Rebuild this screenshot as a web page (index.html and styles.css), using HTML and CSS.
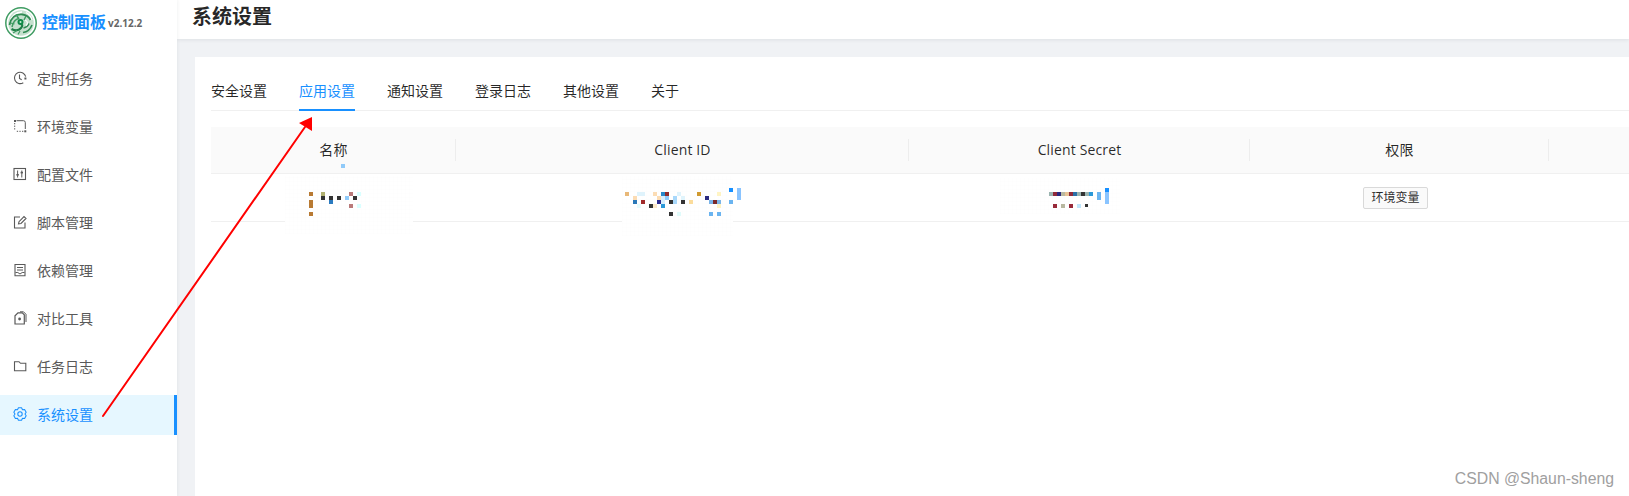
FILE: index.html
```html
<!DOCTYPE html>
<html lang="zh-CN">
<head>
<meta charset="utf-8">
<title>系统设置</title>
<link rel="stylesheet" href="styles.css">
</head>
<body>
<div class="layout">
  <aside class="sider">
    <div class="brand">
      <svg class="logo" viewBox="0 0 32 32" aria-hidden="true">
        <circle cx="16" cy="16" r="15.200" fill="#fff" stroke="#3f9c62" stroke-width="1.500"/>
        <circle cx="16" cy="16" r="12.800" fill="#c4e0cd"/>
        <path d="M5 15C6 9 11 5 17 5M27 13C26 9 24 7 21 5.500" fill="none" stroke="#fff" stroke-width="1.300"/>
        <path d="M4.500 18C6 10 11 7 17.500 7.500 21 8 24 10 25.500 13" fill="none" stroke="#2f8a52" stroke-width="1.800"/>
        <path d="M7 20C8 15 11 12 14 11.500M11 7.500 14 12M21 9 19 13" fill="none" stroke="#3f9c62" stroke-width="1.500"/>
        <path d="M6.500 22C10 24 14 23.500 16 21 18 19 17.500 17 15.500 17" fill="none" stroke="#1f7f47" stroke-width="2.200"/>
        <path d="M18 25.500C22 25 25.500 22 27 18M18.500 21C21 20.500 23 19 24 16.500" fill="none" stroke="#2f8a52" stroke-width="1.600"/>
        <path d="M8 26 12 23.500M13 27.500 15 24M5.500 16 9.500 17" fill="none" stroke="#3f9c62" stroke-width="1.200"/>
        <path d="M20 13C23 14 23 17 21 18.500" fill="none" stroke="#fff" stroke-width="1.200"/>
        <circle cx="15.500" cy="15" r="3" fill="#0f8a48"/>
        <circle cx="15.500" cy="15" r="1" fill="#c9efd6"/>
      </svg>
      <span class="brand-name">控制面板</span>
      <span class="brand-version">v2.12.2</span>
    </div>
    <nav class="menu">
      <a class="menu-item">
        <svg class="menu-icon" viewBox="0 0 14 14" aria-hidden="true"><path d="M12.700 5.600A5.700 5.700 0 1 0 10.300 11.700" fill="none" stroke="currentColor" stroke-width="1.100"/><path d="M6.500 3.600V7.400L8.700 8.800" fill="none" stroke="currentColor" stroke-width="1.100"/><rect x="11.400" y="6.500" width="2" height="2" fill="currentColor"/></svg>
        <span>定时任务</span>
      </a>
      <a class="menu-item">
        <svg class="menu-icon" viewBox="0 0 14 14" aria-hidden="true"><path d="M3.500 1.700H10.500Q12.300 1.700 12.300 3.500V10" fill="none" stroke="currentColor" stroke-width="1"/><path d="M1.700 4V11M3.800 12.300H10.500" fill="none" stroke="currentColor" stroke-width="1" stroke-dasharray="1.300 1.300"/><rect x="1" y="1" width="2" height="2" fill="currentColor"/><rect x="11.300" y="11.300" width="2" height="2" fill="currentColor"/></svg>
        <span>环境变量</span>
      </a>
      <a class="menu-item">
        <svg class="menu-icon" viewBox="0 0 14 14" aria-hidden="true"><rect x="1" y="1.500" width="11.500" height="11" fill="none" stroke="currentColor" stroke-width="1.100"/><path d="M4.600 3.500V10.500M8.800 3.500V10.500" fill="none" stroke="currentColor"/><rect x="3.400" y="7" width="2.400" height="1.600" fill="currentColor"/><rect x="7.600" y="4.800" width="2.400" height="1.600" fill="currentColor"/></svg>
        <span>配置文件</span>
      </a>
      <a class="menu-item">
        <svg class="menu-icon" viewBox="0 0 14 14" aria-hidden="true"><path d="M7 2H1.500V13H12V7.500" fill="none" stroke="currentColor" stroke-width="1.100"/><path d="M5.500 8.800L6 6.700 11 1.500 13 3.500 8 8.500z" fill="none" stroke="currentColor" stroke-width="1.100"/></svg>
        <span>脚本管理</span>
      </a>
      <a class="menu-item">
        <svg class="menu-icon" viewBox="0 0 14 14" aria-hidden="true"><path d="M2 1.500H12V12.800H2z" fill="none" stroke="currentColor" stroke-width="1.100"/><path d="M4 4.500H10M4 7H10" stroke="currentColor" fill="none"/><path d="M2.500 9.500H4.800L7 11 9.200 9.500H11.500" fill="none" stroke="currentColor"/></svg>
        <span>依赖管理</span>
      </a>
      <a class="menu-item">
        <svg class="menu-icon" viewBox="0 0 14 14" aria-hidden="true"><path d="M5 1.800H9.300L11.300 3.800V13H2V4.800z" fill="none" stroke="currentColor" stroke-width="1.200"/><path d="M7 .8H10.500L13 3.300V11" fill="none" stroke="currentColor"/><circle cx="6.600" cy="8" r="1.400" fill="currentColor"/></svg>
        <span>对比工具</span>
      </a>
      <a class="menu-item">
        <svg class="menu-icon" viewBox="0 0 14 14" aria-hidden="true"><path d="M1.500 2.700H6L7.500 4.300H12.800V11.800H1.500z" fill="none" stroke="currentColor" stroke-width="1.100"/></svg>
        <span>任务日志</span>
      </a>
      <a class="menu-item is-active">
        <svg class="menu-icon" viewBox="0 0 14 14" aria-hidden="true"><path d="M5.450.79 8.550.79 9.500 2.670 11.600 2.550 13.150 5.240 12 7 13.150 8.760 11.600 11.450 9.500 11.330 8.550 13.210 5.450 13.210 4.500 11.330 2.400 11.450.85 8.760 2 7 .85 5.240 2.400 2.550 4.500 2.670z" fill="none" stroke="currentColor" stroke-width="1.050" stroke-linejoin="round"/><circle cx="7" cy="7" r="2.200" fill="none" stroke="currentColor" stroke-width="1.050"/></svg>
        <span>系统设置</span>
      </a>
    </nav>
  </aside>

  <div class="main">
    <header class="page-header"><h1 class="page-title">系统设置</h1></header>
    <div class="content">
      <section class="card">
        <div class="tabs">
          <a class="tab">安全设置</a>
          <a class="tab is-active">应用设置</a>
          <a class="tab">通知设置</a>
          <a class="tab">登录日志</a>
          <a class="tab">其他设置</a>
          <a class="tab">关于</a>
        </div>
        <table class="table">
          <colgroup>
            <col class="col-name"><col class="col-id"><col class="col-secret"><col class="col-scope"><col class="col-action">
          </colgroup>
          <thead>
            <tr><th>名称</th><th>Client ID</th><th>Client Secret</th><th>权限</th><th></th></tr>
          </thead>
          <tbody>
            <tr><td></td><td></td><td></td><td><span class="tag">环境变量</span></td><td></td></tr>
          </tbody>
        </table>
      </section>
    </div>
  </div>
</div>

<div class="veil veil-name"></div>
<div class="veil veil-id"></div>
<div class="veil veil-secret"></div>

<svg class="overlay" viewBox="0 0 1629 496" aria-hidden="true">
  <g>
    <rect x="341" y="164" width="4" height="4" fill="#90caf9"/>
    <rect x="309" y="192" width="4" height="4" fill="#b87a33"/>
    <rect x="309" y="200" width="4" height="8" fill="#b87a33"/>
    <rect x="309" y="212" width="4" height="4" fill="#b87a33"/>
    <rect x="321" y="192" width="4" height="4" fill="#b0b070"/>
    <rect x="321" y="196" width="4" height="4" fill="#333"/>
    <rect x="329" y="196" width="4" height="4" fill="#333"/>
    <rect x="329" y="200" width="4" height="4" fill="#2a7abf"/>
    <rect x="337" y="196" width="4" height="4" fill="#333"/>
    <rect x="345" y="196" width="4" height="4" fill="#90caf9"/>
    <rect x="349" y="192" width="4" height="4" fill="#b97a7a"/>
    <rect x="353" y="196" width="4" height="4" fill="#333"/>
    <rect x="357" y="192" width="4" height="4" fill="#d9ffff"/>
    <rect x="349" y="204" width="4" height="4" fill="#b97a7a"/>
    <rect x="357" y="204" width="4" height="4" fill="#d9ffff"/>
  </g>
  <g>
    <rect x="625" y="192" width="4" height="4" fill="#e8b878"/>
    <rect x="633" y="196" width="4" height="4" fill="#fbdcb4"/>
    <rect x="633" y="200" width="4" height="4" fill="#2a78b8"/>
    <rect x="637" y="192" width="8" height="4" fill="#dff3fc"/>
    <rect x="641" y="200" width="4" height="4" fill="#a02a2a"/>
    <rect x="637" y="204" width="4" height="4" fill="#e8fbfb"/>
    <rect x="649" y="204" width="4" height="4" fill="#333"/>
    <rect x="653" y="192" width="4" height="4" fill="#fbdcb4"/>
    <rect x="653" y="204" width="4" height="4" fill="#fbe8c8"/>
    <rect x="657" y="196" width="4" height="4" fill="#fbdcb4"/>
    <rect x="657" y="200" width="4" height="4" fill="#2a2a90"/>
    <rect x="661" y="192" width="4" height="4" fill="#2a88c8"/>
    <rect x="665" y="192" width="4" height="4" fill="#902a2a"/>
    <rect x="661" y="204" width="4" height="4" fill="#2a98d8"/>
    <rect x="661" y="196" width="4" height="8" fill="#d8eefc"/>
    <rect x="665" y="196" width="4" height="4" fill="#90caf9"/>
    <rect x="669" y="200" width="4" height="4" fill="#333"/>
    <rect x="673" y="196" width="4" height="8" fill="#a8d8fb"/>
    <rect x="677" y="192" width="4" height="4" fill="#dff3fc"/>
    <rect x="669" y="212" width="4" height="4" fill="#333"/>
    <rect x="677" y="212" width="4" height="4" fill="#e0fbfb"/>
    <rect x="681" y="196" width="4" height="4" fill="#e0f4fc"/>
    <rect x="681" y="200" width="4" height="4" fill="#333"/>
    <rect x="689" y="200" width="4" height="4" fill="#fbdc9c"/>
    <rect x="697" y="192" width="4" height="4" fill="#d09a30"/>
    <rect x="705" y="196" width="4" height="4" fill="#2a2a80"/>
    <rect x="709" y="200" width="4" height="4" fill="#7ab4e8"/>
    <rect x="713" y="200" width="4" height="4" fill="#7a2a2a"/>
    <rect x="717" y="200" width="4" height="4" fill="#7ab4e8"/>
    <rect x="717" y="192" width="4" height="4" fill="#fff4c4"/>
    <rect x="717" y="204" width="4" height="4" fill="#fff4c4"/>
    <rect x="709" y="212" width="4" height="4" fill="#6ab4f0"/>
    <rect x="717" y="212" width="4" height="4" fill="#6ab4f0"/>
    <rect x="729" y="188" width="4" height="4" fill="#1890ff"/>
    <rect x="729" y="200" width="4" height="4" fill="#6ab4f0"/>
    <rect x="737" y="188" width="4" height="12" fill="#8ac4ff"/>
  </g>
  <g>
    <rect x="1049" y="192" width="4" height="4" fill="#9ab4b0"/>
    <rect x="1053" y="192" width="4" height="4" fill="#902a3a"/>
    <rect x="1057" y="192" width="4" height="4" fill="#2a2a80"/>
    <rect x="1061" y="192" width="4" height="4" fill="#b8b8a0"/>
    <rect x="1065" y="192" width="4" height="4" fill="#e8c498"/>
    <rect x="1069" y="192" width="4" height="4" fill="#902a3a"/>
    <rect x="1073" y="192" width="4" height="4" fill="#2a70a8"/>
    <rect x="1077" y="192" width="4" height="4" fill="#9ab4b0"/>
    <rect x="1081" y="192" width="4" height="4" fill="#333"/>
    <rect x="1085" y="192" width="4" height="4" fill="#9ab4b0"/>
    <rect x="1089" y="192" width="4" height="4" fill="#2a98d8"/>
    <rect x="1097" y="192" width="4" height="8" fill="#6ab4f0"/>
    <rect x="1105" y="188" width="4" height="4" fill="#1890ff"/>
    <rect x="1105" y="192" width="4" height="12" fill="#8ac4ff"/>
    <rect x="1053" y="204" width="4" height="4" fill="#982a3a"/>
    <rect x="1061" y="204" width="4" height="4" fill="#b8b8a0"/>
    <rect x="1069" y="204" width="4" height="4" fill="#982a3a"/>
    <rect x="1077" y="204" width="4" height="4" fill="#bfe6fb"/>
    <rect x="1085" y="204" width="3" height="3" fill="#333"/>
  </g>
  <path d="M103 416 305 127" stroke="#f00" stroke-width="2" fill="none" stroke-linecap="round"/>
  <path d="M312 117 299 123 312 131z" fill="#f00"/>
</svg>

<div class="watermark">CSDN @Shaun-sheng</div>
</body>
</html>
```

FILE: styles.css
```css
* { box-sizing: border-box; }

html, body {
  margin: 0;
  width: 100%;
  height: 100%;
  overflow: hidden;
}

body {
  position: relative;
  background: #f0f2f5;
  color: rgba(0, 0, 0, .85);
  font-family: "Open Sans", "Noto Sans CJK SC", sans-serif;
  font-size: 14px;
}

.layout {
  display: flex;
  height: 496px;
}

.sider {
  flex: 0 0 177px;
  background: #fff;
  box-shadow: 1px 0 3px rgba(29, 35, 41, .05);
  position: relative;
  z-index: 2;
}

.brand {
  display: flex;
  align-items: center;
  height: 59px;
  padding: 0 0 14px 5px;
  white-space: nowrap;
}

.logo {
  flex: none;
  width: 32px;
  height: 32px;
  margin-right: 5px;
}

.brand-name {
  margin-bottom: 3px;
  color: #1890ff;
  font-size: 16px;
  font-weight: 700;
}

.brand-version {
  margin: 1px 0 0 2px;
  color: #666;
  font-size: 10px;
  font-weight: 700;
}

.menu {
  display: flex;
  flex-direction: column;
  gap: 8px;
}

.menu-item {
  display: flex;
  align-items: center;
  height: 40px;
  padding: 0 0 2px 13px;
  color: #595959;
}

.menu-icon {
  flex: none;
  width: 14px;
  height: 14px;
  margin-right: 10px;
}

.menu-item.is-active {
  background: #e6f7ff;
  border-right: 3px solid #1890ff;
  color: #1890ff;
}

.main {
  flex: 1;
  min-width: 0;
  display: flex;
  flex-direction: column;
}

.page-header {
  flex: 0 0 39px;
  padding-left: 15px;
  background: #fff;
  box-shadow: 0 1px 4px rgba(0, 21, 41, .08);
}

.page-title {
  margin: 0;
  font-size: 20px;
  font-weight: 700;
  line-height: 34px;
}

.content {
  flex: 1;
  min-height: 0;
  padding: 18px 0 0 18px;
}

.card {
  height: 100%;
  padding: 8px 0 0 16px;
  background: #fff;
  overflow: hidden;
}

.tabs {
  display: flex;
  gap: 32px;
  border-bottom: 1px solid #f0f0f0;
}

.tab {
  height: 46px;
  margin-bottom: -1px;
  padding: 15px 0 7px;
  border-bottom: 2px solid transparent;
  line-height: 22px;
}

.tab.is-active {
  color: #1890ff;
  border-bottom-color: #1890ff;
}

.table {
  width: 1458px;
  margin-top: 16px;
  table-layout: fixed;
  border-collapse: separate;
  border-spacing: 0;
}

.col-name { width: 245px; }
.col-id { width: 453px; }
.col-secret { width: 341px; }
.col-scope { width: 299px; }
.col-action { width: 120px; }

.table th {
  position: relative;
  height: 47px;
  padding: 0 0 2px;
  background: #fafafa;
  border-bottom: 1px solid #f0f0f0;
  font-weight: 400;
  letter-spacing: .15px;
  text-align: center;
}

.table th:not(:last-child)::after {
  content: "";
  position: absolute;
  top: 12px;
  right: 0;
  width: 1px;
  height: 22px;
  background: #ededed;
}

.table td {
  height: 48px;
  padding: 0;
  border-bottom: 1px solid #f0f0f0;
  text-align: center;
}

.tag {
  display: inline-block;
  height: 22px;
  margin-right: 8px;
  padding: 0 7px;
  border: 1px solid #d9d9d9;
  border-radius: 2px;
  background: #fafafa;
  font-size: 12px;
  line-height: 20px;
  vertical-align: middle;
}

.veil {
  position: absolute;
  z-index: 3;
  background-color: #fff;
  background-image:
    repeating-linear-gradient(0deg, rgba(0, 0, 0, .005) 0 1px, transparent 1px 4px),
    repeating-linear-gradient(90deg, rgba(0, 0, 0, .005) 0 1px, transparent 1px 4px);
}

.veil-name { left: 285px; top: 176px; width: 128px; height: 58px; }
.veil-id { left: 622px; top: 176px; width: 111px; height: 60px; }
.veil-secret { left: 1000px; top: 178px; width: 120px; height: 36px; }

.overlay {
  position: absolute;
  left: 0;
  top: 0;
  z-index: 4;
  width: 1629px;
  height: 496px;
  pointer-events: none;
}

.watermark {
  position: absolute;
  z-index: 5;
  right: 15px;
  bottom: 7px;
  color: #a0a0a0;
  font-family: "Liberation Sans", sans-serif;
  font-size: 15.800px;
  line-height: 20px;
}
```
